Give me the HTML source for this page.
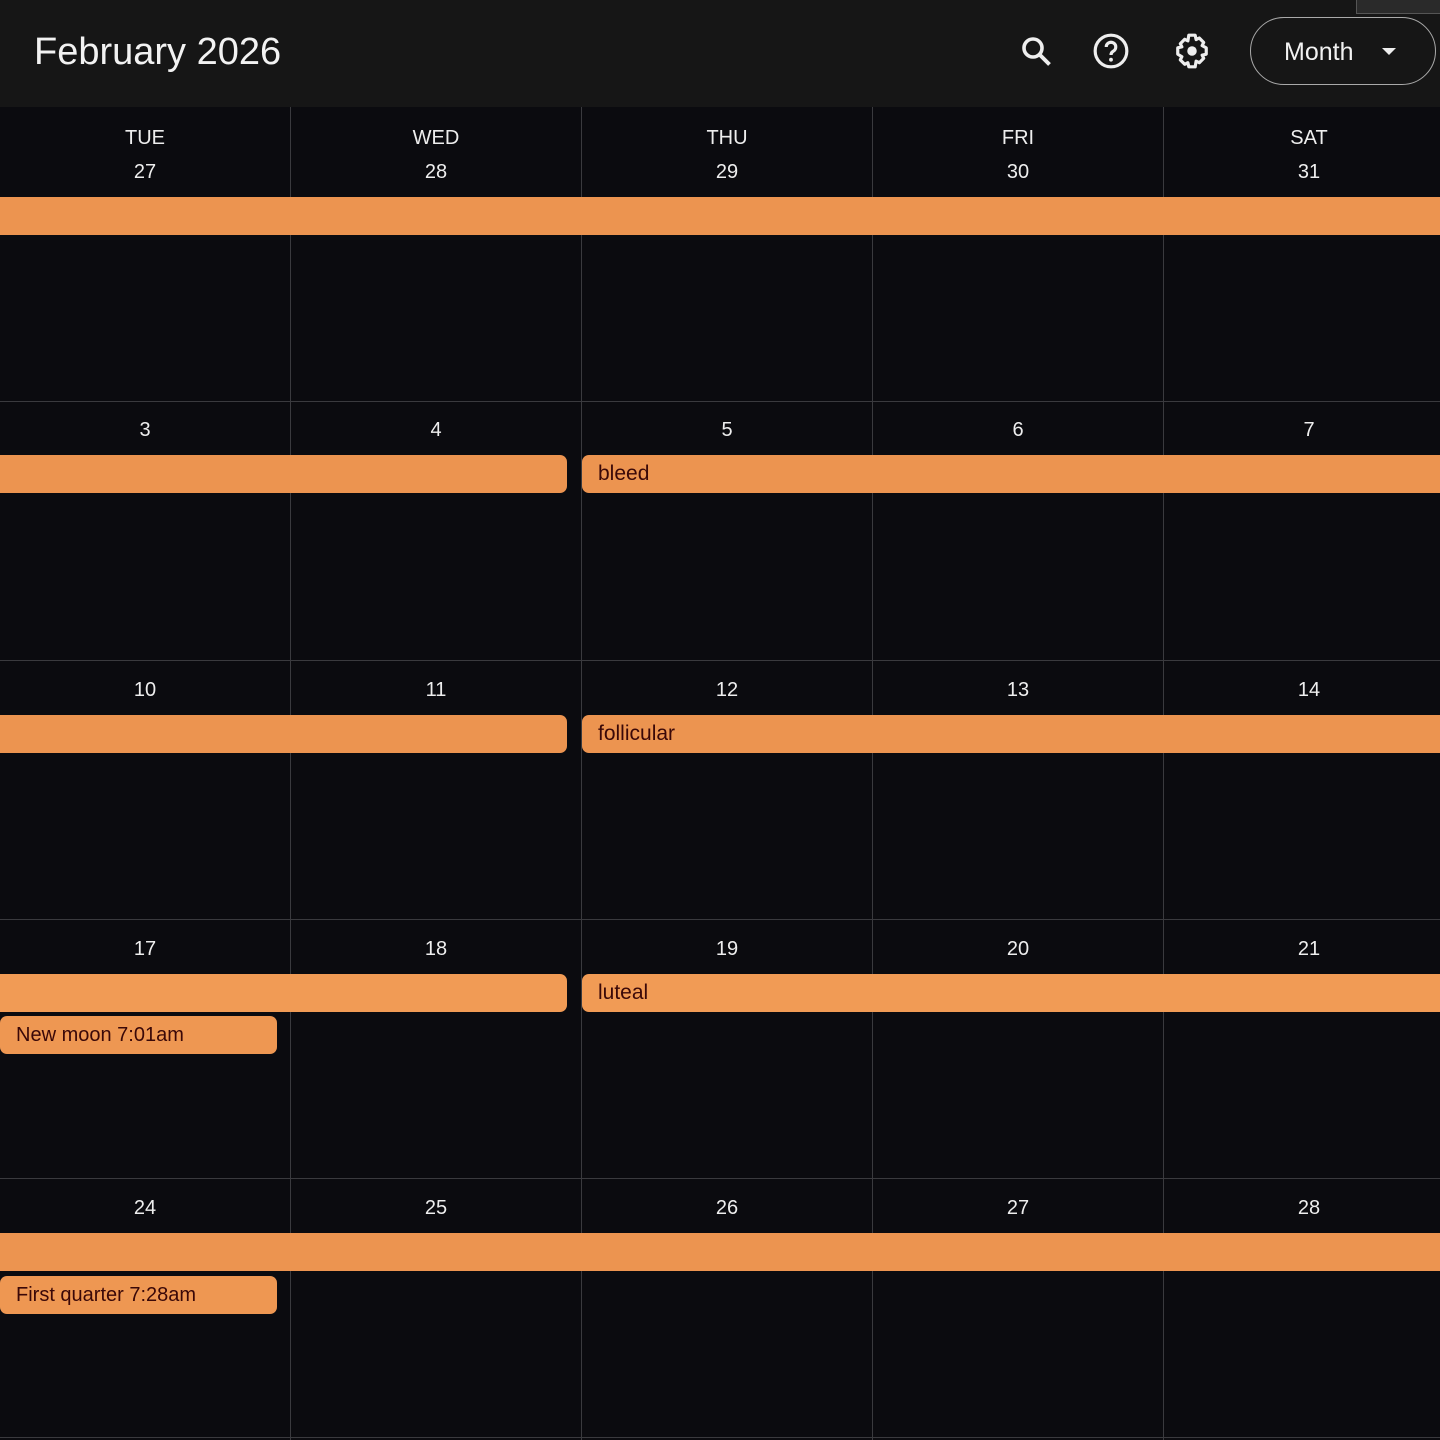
<!DOCTYPE html>
<html><head><style>
body{margin:0;width:1440px;height:1440px;background:#0b0b0f;position:relative;overflow:hidden;font-family:"Liberation Sans",sans-serif;color:#eee}
.hdr{position:absolute;left:0;top:0;width:1440px;height:107px;background:#161616}
.t{position:absolute;left:34px;top:31px;font-size:38px;color:#f2f2f2}
.v{position:absolute;width:1px;background:#3a3a3e;top:107px;height:1333px}
.h{position:absolute;height:1px;background:#3a3a3e;left:0;width:1440px}
.lb{position:absolute;width:290px;text-align:center;font-size:20px;color:#eee}
.bar{position:absolute;height:38px;background:#ec9450;border-radius:7px;color:#3a0808;font-size:21px;line-height:38px;padding-left:16px;box-sizing:border-box}
.ev{position:absolute;height:38px;background:#ee9752;border-radius:7px;color:#3a0808;font-size:20px;line-height:38px;padding-left:16px;box-sizing:border-box;left:0;width:277px}
</style></head><body>
<div class="hdr">
<div class="t">February 2026</div>
<svg style="position:absolute;left:1018px;top:33px" width="36" height="36" viewBox="0 0 24 24"><circle cx="10" cy="10" r="6" fill="none" stroke="#eee" stroke-width="2.4"/><path d="M14.5 14.5L21 21" stroke="#eee" stroke-width="2.6"/></svg>
<svg style="position:absolute;left:1092px;top:32px" width="38" height="38" viewBox="0 0 24 24"><circle cx="12" cy="12" r="10" fill="none" stroke="#eee" stroke-width="2"/><path d="M9 9.5a3 3 0 1 1 4.5 2.6c-1 .6-1.5 1.2-1.5 2.4" fill="none" stroke="#eee" stroke-width="2"/><circle cx="12" cy="17.5" r="1.2" fill="#eee"/></svg>
<svg style="position:absolute;left:1173px;top:32px" width="38" height="38" viewBox="0 0 24 24"><path d="M10 2h4l.6 2.8 2-1 2.8 2.8-1 2L21 10v4l-2.6.6 1 2-2.8 2.8-2-1L14 22h-4l-.6-2.6-2 1-2.8-2.8 1-2L3 14v-4l2.6-.6-1-2 2.8-2.8 2 1z" fill="none" stroke="#eee" stroke-width="2" stroke-linejoin="round"/><circle cx="12" cy="12" r="3" fill="#eee"/></svg>
<div style="position:absolute;left:1250px;top:17px;width:186px;height:68px;border:1.5px solid #aaa;border-radius:34px;box-sizing:border-box"></div>
<div style="position:absolute;left:1284px;top:38px;font-size:25px;color:#f2f2f2">Month</div>
<div style="position:absolute;left:1382px;top:48px;border-left:7px solid transparent;border-right:7px solid transparent;border-top:7px solid #eee"></div>
<div style="position:absolute;left:1356px;top:-10px;width:90px;height:22px;background:#2a2a2a;border:1px solid #555"></div>
</div>
<div class="v" style="left:290px"></div><div class="v" style="left:581px"></div><div class="v" style="left:872px"></div><div class="v" style="left:1163px"></div>
<div class="h" style="top:401px"></div><div class="h" style="top:660px"></div><div class="h" style="top:919px"></div><div class="h" style="top:1178px"></div><div class="h" style="top:1437px"></div>
<div class="lb" style="left:0;top:127px">TUE</div><div class="lb" style="left:291px;top:127px">WED</div><div class="lb" style="left:582px;top:127px">THU</div><div class="lb" style="left:873px;top:127px">FRI</div><div class="lb" style="left:1164px;top:127px">SAT</div>
<div class="lb" style="left:0;top:161px">27</div><div class="lb" style="left:291px;top:161px">28</div><div class="lb" style="left:582px;top:161px">29</div><div class="lb" style="left:873px;top:161px">30</div><div class="lb" style="left:1164px;top:161px">31</div>
<div class="lb" style="left:0;top:419px">3</div><div class="lb" style="left:291px;top:419px">4</div><div class="lb" style="left:582px;top:419px">5</div><div class="lb" style="left:873px;top:419px">6</div><div class="lb" style="left:1164px;top:419px">7</div>
<div class="lb" style="left:0;top:679px">10</div><div class="lb" style="left:291px;top:679px">11</div><div class="lb" style="left:582px;top:679px">12</div><div class="lb" style="left:873px;top:679px">13</div><div class="lb" style="left:1164px;top:679px">14</div>
<div class="lb" style="left:0;top:938px">17</div><div class="lb" style="left:291px;top:938px">18</div><div class="lb" style="left:582px;top:938px">19</div><div class="lb" style="left:873px;top:938px">20</div><div class="lb" style="left:1164px;top:938px">21</div>
<div class="lb" style="left:0;top:1197px">24</div><div class="lb" style="left:291px;top:1197px">25</div><div class="lb" style="left:582px;top:1197px">26</div><div class="lb" style="left:873px;top:1197px">27</div><div class="lb" style="left:1164px;top:1197px">28</div>
<div class="bar" style="left:0;width:1440px;top:197px;border-radius:0"></div>
<div class="bar" style="left:0;width:567px;top:455px;border-radius:0 7px 7px 0"></div>
<div class="bar" style="left:582px;width:858px;top:455px;border-radius:7px 0 0 7px">bleed</div>
<div class="bar" style="left:0;width:567px;top:715px;border-radius:0 7px 7px 0"></div>
<div class="bar" style="left:582px;width:858px;top:715px;border-radius:7px 0 0 7px">follicular</div>
<div class="bar" style="left:0;width:567px;top:974px;border-radius:0 7px 7px 0;background:#f19b55"></div>
<div class="bar" style="left:582px;width:858px;top:974px;border-radius:7px 0 0 7px;background:#f19b55">luteal</div>
<div class="ev" style="top:1016px">New moon 7:01am</div>
<div class="bar" style="left:0;width:1440px;top:1233px;border-radius:0"></div>
<div class="ev" style="top:1276px">First quarter 7:28am</div>
</body></html>
